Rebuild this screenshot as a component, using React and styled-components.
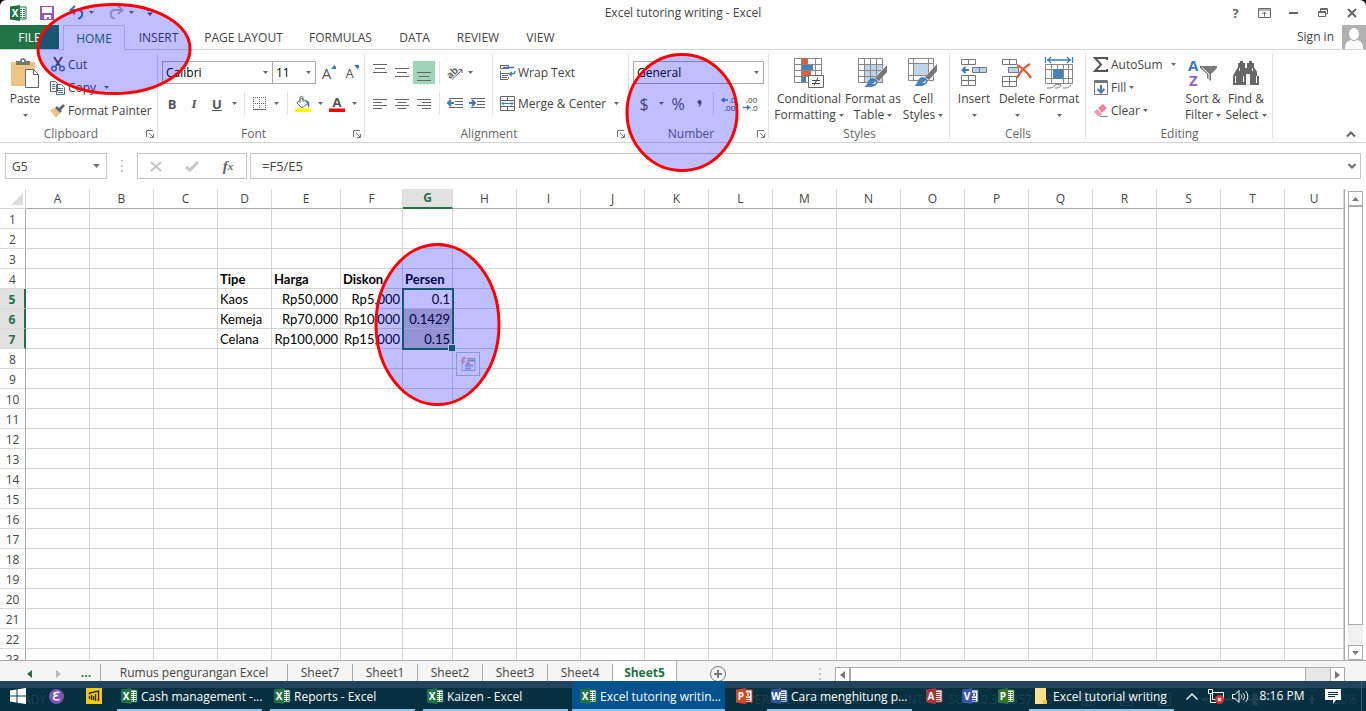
import styled, { createGlobalStyle } from "styled-components";

const tabs = [
    { name: "INSERT", w: 67 },
    { name: "PAGE LAYOUT", w: 103 },
    { name: "FORMULAS", w: 91 },
    { name: "DATA", w: 57 },
    { name: "REVIEW", w: 70 },
    { name: "VIEW", w: 55 },
]

const columns = [
    ["A", 64], ["B", 64], ["C", 64], ["D", 54], ["E", 69], ["F", 62], ["G", 50], ["H", 64], ["I", 64], ["J", 64], ["K", 64],
    ["L", 64], ["M", 64], ["N", 64], ["O", 64], ["P", 64], ["Q", 64], ["R", 64], ["S", 64], ["T", 64], ["U", null],
]

const rows = Array.from({ length: 23 }, (_, i) => i + 1)

const cells = {
    D4: "Tipe", E4: "Harga", F4: "Diskon", G4: "Persen",
    D5: "Kaos", E5: "Rp50,000", F5: "Rp5,000", G5: "0.1",
    D6: "Kemeja", E6: "Rp70,000", F6: "Rp10,000", G6: "0.1429",
    D7: "Celana", E7: "Rp100,000", F7: "Rp15,000", G7: "0.15",
}

const sheets = ["Sheet7", "Sheet1", "Sheet2", "Sheet3", "Sheet4"]

export default function App() {
    return (
        <Screen>
            <GlobalStyle />
            <Window>
                <TitleBar />
                <RibbonTabs />
                <Ribbon />
                <FormulaBar />
                <Workspace>
                    <Sheet />
                    <VerticalScroll>
                        <ScrollButton aria-label="Scroll up"><Triangle dir="up" /></ScrollButton>
                        <VerticalThumb />
                        <VerticalTrack />
                        <ScrollButton aria-label="Scroll down"><Triangle dir="down" /></ScrollButton>
                    </VerticalScroll>
                </Workspace>
                <SheetBar />
            </Window>
            <Footer>
                <StatusBar />
                <Taskbar />
            </Footer>
            <Circle $x={36} $y={3} $w={156} $h={92} viewBox="0 0 156 92"><ellipse cx="78" cy="46" rx="76" ry="44.5" /></Circle>
            <Circle $x={625} $y={53} $w={114} $h={120} viewBox="0 0 114 120"><ellipse cx="57" cy="59.5" rx="55" ry="58" /></Circle>
            <Circle $x={374} $y={243} $w={128} $h={164} viewBox="0 0 128 164"><ellipse cx="63.5" cy="81.5" rx="61.5" ry="80" /></Circle>
        </Screen>
    );
}

function Triangle({ dir = "down", color = "#777" }) {
    const shapes = {
        down: "0,0 7,0 3.5,4",
        up: "0,4 7,4 3.5,0",
        left: "5,0 5,8 0,4",
        right: "0,0 0,8 5,4",
    }
    const side = dir === "left" || dir === "right"
    return (
        <svg width={side ? 5 : 7} height={side ? 8 : 4} aria-hidden="true">
            <polygon points={shapes[dir]} fill={color} />
        </svg>
    );
}

function Caret() {
    return (
        <svg width="5" height="3" aria-hidden="true"><polygon points="0,0 5,0 2.5,3" fill="#666" /></svg>
    );
}

function OfficeIcon({ letter, color, kind }) {
    return (
        <svg width="16" height="16" viewBox="0 0 16 16" aria-hidden="true">
            <rect x="8" y="2" width="8" height="12" fill="#fff" stroke={color} />
            {kind === "chart"
                ? <path d="M10.5 5h3v3h-3zM10 10.5h4M10 12.5h4" stroke={color} fill="none" />
                : kind === "grid"
                    ? <path d="M10 4.5h2M13 4.5h2M10 6.5h2M13 6.5h2M10 8.5h2M13 8.5h2M10 10.5h2M13 10.5h2M10 12.5h2M13 12.5h2" stroke={color} />
                    : <path d="M10 4.5h4.500M10 6.5h4.500M10 8.5h4.500M10 10.5h4.500M10 12.500h4.500" stroke={color} />}
            <path d="M0 1.500 10 0v16L0 14.500z" fill={color} />
            <text x="5" y="12" fontSize="10" fontWeight="700" textAnchor="middle" fill="#fff">{letter}</text>
        </svg>
    );
}

function TitleBar() {
    return (
        <TitleRow>
            <QuickAccess>
                <QuickButton $w={36} aria-label="Excel"><OfficeIcon letter="X" color="#217346" kind="grid" /></QuickButton>
                <QuickButton $w={22} aria-label="Save">
                    <svg width="14" height="14" viewBox="0 0 14 14">
                        <path d="M0 0h14v14H0z" fill="#8e5bb5" />
                        <path d="M2 1h10v6H2zM4 9h7v4H9v-2H7v2H4z" fill="#fff" />
                    </svg>
                </QuickButton>
                <QuickButton $w={28} $pad={10} aria-label="Undo">
                    <svg width="16" height="14" viewBox="0 0 16 14" fill="none" stroke="#3f6fb5" strokeWidth="2">
                        <path d="M6 0 1.500 4 6 8M2 4h7c4 0 5 3 4 5.500-.5 1.500-2 3-4 3" />
                    </svg>
                </QuickButton>
                <QuickButton $w={10} aria-label="Undo list"><Caret /></QuickButton>
                <QuickButton $w={30} $pad={10} aria-label="Redo">
                    <svg width="15" height="14" viewBox="0 0 15 14" fill="none" stroke="#b8b8b8" strokeWidth="2">
                        <path d="M9 0l4.500 4L9 8M13 4H6C2 4 1 7 2 9.500c.5 1.500 2 3 4 3" />
                    </svg>
                </QuickButton>
                <QuickButton $w={10} aria-label="Redo list"><Caret /></QuickButton>
                <QuickButton $w={28} aria-label="Customize">
                    <svg width="6" height="6" viewBox="0 0 6 6"><path d="M0 0h6v1H0zM0 2.500h6L3 6z" fill="#555" /></svg>
                </QuickButton>
            </QuickAccess>
            <WindowTitle>Excel tutoring writing - Excel</WindowTitle>
            <WindowButtons>
                <WindowButton $bold aria-label="Help">?</WindowButton>
                <WindowButton aria-label="Ribbon options">
                    <svg width="13" height="10" viewBox="0 0 13 10" fill="none" stroke="#666">
                        <path d="M.5.5h12v9H.5zM.5 2h12M6.500 8.500V4M4.500 6l2-2 2 2" />
                    </svg>
                </WindowButton>
                <WindowButton aria-label="Minimize"><svg width="9" height="2"><rect width="9" height="2" fill="#666" /></svg></WindowButton>
                <WindowButton aria-label="Restore">
                    <svg width="10" height="10" viewBox="0 0 10 10" fill="none" stroke="#666">
                        <path d="M.5 3.500h7v5h-7zM.5 4.500h7M2.500 3V.5h7v5.500H8M2.500 1.500h7" />
                    </svg>
                </WindowButton>
                <WindowButton aria-label="Close">
                    <svg width="10" height="10" viewBox="0 0 10 10" stroke="#666" strokeWidth="2"><path d="M1 1l8 8M9 1 1 9" /></svg>
                </WindowButton>
            </WindowButtons>
        </TitleRow>
    );
}

function RibbonTabs() {
    return (
        <TabRow>
            <FileTab>FILE</FileTab>
            <HomeTab>HOME</HomeTab>
            {tabs.map((t) => <RibbonTab key={t.name} $w={t.w}>{t.name}</RibbonTab>)}
            <SignIn href="#signin">Sign in</SignIn>
            <svg width="24" height="24" viewBox="0 0 24 24" aria-hidden="true">
                <path d="M0 0h24v24H0z" fill="#b1b1b1" />
                <ellipse cx="12" cy="9" rx="5" ry="6" fill="#fff" />
                <path d="M3 24c0-6 2-8 6-9 2 1.500 4 1.500 6 0 4 1 6 3 6 9z" fill="#fff" />
            </svg>
        </TabRow>
    );
}

function Launcher({ label }) {
    return (
        <LauncherButton aria-label={label}>
            <svg width="8" height="8" viewBox="0 0 8 8" fill="none" stroke="#777">
                <path d="M.5 7V.5H7M3 3l4 4M7.500 4v3.500H4" />
            </svg>
        </LauncherButton>
    );
}

function Group({ name, w, launcher, children }) {
    return (
        <GroupBox $w={w} aria-label={name}>
            <GroupBody>{children}</GroupBody>
            <GroupLabel><span>{name}</span>{launcher && <Launcher label={name + " settings"} />}</GroupLabel>
        </GroupBox>
    );
}

function Combo({ label, value, w }) {
    return (
        <ComboBox $w={w}>
            <select aria-label={label} defaultValue={value}><option>{value}</option></select>
            <Caret />
        </ComboBox>
    );
}

const lineSets = {
    full: "M0 .5h14M2 4.500h10M0 8.500h14",
    left: "M0 .5h14M0 3.500h9M0 6.500h14M0 9.500h9",
    center: "M0 .5h14M2.500 3.500h9M0 6.500h14M2.500 9.500h9",
    right: "M0 .5h14M5 3.500h9M0 6.500h14M5 9.500h9",
}

function Lines({ set, drop = 0 }) {
    return (
        <svg width="14" height="18" viewBox="0 0 14 18" aria-hidden="true"><path d={lineSets[set]} transform={`translate(0 ${drop})`} stroke="#666" /></svg>
    );
}

function Indent({ out }) {
    return (
        <svg width="16" height="11" viewBox="0 0 16 11" aria-hidden="true">
            <path d="M2 .5h14M8 3.500h8M8 6.500h8M2 9.500h14" stroke="#666" />
            <path d={out ? "M7 5H1M4 2 1 5l3 3" : "M0 5h6M3 2l3 3-3 3"} stroke="#3f7ab8" strokeWidth="2" fill="none" />
        </svg>
    );
}

function Decimals({ more }) {
    return (
        <svg width="16" height="14" viewBox="0 0 16 14" fontSize="8" fill="#444" aria-hidden="true">
            <text x={more ? 8 : 3} y="6">{more ? ".0" : ".00"}</text>
            <text x={more ? 3 : 8} y="14">{more ? ".00" : ".0"}</text>
            <path d={more ? "M7 3H1M3.500 1 1 3l2.500 2" : "M0 10.500h6M4 8.500l2.500 2-2.500 2"} fill="none" stroke="#3f7ab8" strokeWidth="1.500" />
        </svg>
    );
}

function Brush({ x = 0, y = 0 }) {
    return (
        <g transform={`translate(${x} ${y})`}>
            <path d="M23 0v7l-8 9-4-3z" fill="#777" stroke="#fff" strokeWidth="1" paintOrder="stroke" />
            <path d="M0 22c4-1 3-8 8-9 4 0 7 3 5 6-3 4-8 3-13 3z" fill="#4a80b8" />
            <path d="M7 19c2 0 4-1 4-3 1 1 1 2 0 3z" fill="#fff" />
        </g>
    );
}

function Ribbon() {
    return (
        <RibbonRow>
            <Group name="Clipboard" w={158} launcher>
                <BigButton $w={50}>
                    <BigIcon>
                        <svg width="28" height="31" viewBox="0 0 28 31">
                            <path d="M0 4h24v24H0z" fill="#ecc583" />
                            <path d="M5 3h4c0-4 6-4 6 0h4v4H5z" fill="#777" />
                            <path d="M11 2h2v2h-2z" fill="#fff" />
                            <path d="M14.500 11.500h8l5 5v13h-13z" fill="#fff" stroke="#666" />
                            <path d="M22.500 11.500v5h5" fill="none" stroke="#666" />
                        </svg>
                    </BigIcon>
                    Paste<ArrowLine><Caret /></ArrowLine>
                </BigButton>
                <SmallStack>
                    <SmallButton>
                        <IconSlot>
                            <svg width="14" height="15" viewBox="0 0 14 15" fill="none">
                                <path d="M3 0l6 9M11 0 5 9" stroke="#555" strokeWidth="2" />
                                <circle cx="3" cy="11.500" r="2.300" stroke="#3f6fb5" strokeWidth="1.400" />
                                <circle cx="11" cy="11.500" r="2.300" stroke="#3f6fb5" strokeWidth="1.400" />
                            </svg>
                        </IconSlot>Cut
                    </SmallButton>
                    <SmallButton>
                        <IconSlot>
                            <svg width="15" height="14" viewBox="0 0 15 14" fill="#fff" stroke="#666">
                                <path d="M.5.5h5l2 2v8h-7zM6.500 3.500h5l3 3v7h-8z" />
                                <path d="M2 3.500h3M2 5.500h3M2 7.500h3M8 7.500h5M8 9.500h5M8 11.500h5" stroke="#3f7ab8" />
                            </svg>
                        </IconSlot>Copy <SpacedCaret><Caret /></SpacedCaret>
                    </SmallButton>
                    <SmallButton>
                        <IconSlot>
                            <svg width="15" height="14" viewBox="0 0 15 14">
                                <path d="M0 6l5-2 5 5-4 5z" fill="#ecc583" />
                                <path d="M5 4l2-2 5 5-2 2zM9 4l4-4 2 2-4 4z" fill="#666" />
                            </svg>
                        </IconSlot>Format Painter
                    </SmallButton>
                </SmallStack>
            </Group>

            <Group name="Font" w={207} launcher>
                <TwoRows>
                    <ToolRow>
                        <Combo label="Font" value="Calibri" w={111} />
                        <Combo label="Font size" value="11" w={43} />
                        <ToolButton $w={26} $size={15} aria-label="Grow font">A<CornerMark><Triangle dir="up" color="#3f7ab8" /></CornerMark></ToolButton>
                        <ToolButton $w={20} $size={13} aria-label="Shrink font">A<CornerMark><Triangle color="#3f7ab8" /></CornerMark></ToolButton>
                    </ToolRow>
                    <ToolRow>
                        <ToolButton $w={20} $bold>B</ToolButton>
                        <ToolButton $w={24} $italic>I</ToolButton>
                        <ToolButton $w={22} $bold $underline>U</ToolButton>
                        <ToolButton $w={12} aria-label="Underline style"><Caret /></ToolButton>
                        <ShortRule />
                        <ToolButton $w={20} aria-label="Borders">
                            <svg width="13" height="13" viewBox="0 0 13 13" stroke="#666" fill="none">
                                <path d="M0 .5h13M0 6.500h13M.5 0v12M6.500 0v12M12.500 0v12" strokeDasharray="1 1" />
                                <path d="M0 12.500h13" />
                            </svg>
                        </ToolButton>
                        <ToolButton $w={14} aria-label="Border style"><Caret /></ToolButton>
                        <ShortRule />
                        <ToolButton $w={22} aria-label="Fill color">
                            <svg width="16" height="16" viewBox="0 0 16 16" fill="none">
                                <path d="M6.500 2 2 7l5 5 6-5zM5 7V1.500C5 0 8 0 8 1.500V6" stroke="#666" />
                                <path d="M10 4c4 0 5 3 4 8-2-2-1-5-4-8z" fill="#3f7ab8" />
                                <path d="M0 12.500h16v3.500H0z" fill="#ff0" />
                            </svg>
                        </ToolButton>
                        <ToolButton $w={12} aria-label="Fill colors"><Caret /></ToolButton>
                        <ToolButton $w={22} aria-label="Font color">
                            <svg width="16" height="16" viewBox="0 0 16 16">
                                <text x="8" y="11" fontSize="13" fontWeight="700" textAnchor="middle" fill="#555">A</text>
                                <path d="M0 12.500h16v3.500H0z" fill="#f00" />
                            </svg>
                        </ToolButton>
                        <ToolButton $w={12} aria-label="Font colors"><Caret /></ToolButton>
                    </ToolRow>
                </TwoRows>
            </Group>

            <Group name="Alignment" w={264} launcher>
                <TwoRows>
                    <ToolRow>
                        <ToolButton $w={22} aria-label="Top align"><Lines set="full" /></ToolButton>
                        <ToolButton $w={22} aria-label="Middle align"><Lines set="full" drop={4} /></ToolButton>
                        <ToolButton $w={22} $active aria-label="Bottom align"><Lines set="full" drop={8} /></ToolButton>
                        <ShortRule />
                        <ToolButton $w={22} aria-label="Orientation">
                            <svg width="16" height="15" viewBox="0 0 16 15">
                                <text x="0" y="11" fontSize="10" fontWeight="700" fill="#666" transform="rotate(-42 6 9)">ab</text>
                                <path d="M5 14.500 15 5M11.500 4.500H15v3.500" stroke="#666" fill="none" />
                            </svg>
                        </ToolButton>
                        <ToolButton $w={8} aria-label="Orientation list"><Caret /></ToolButton>
                    </ToolRow>
                    <ToolRow>
                        <ToolButton $w={22} aria-label="Align left"><Lines set="left" drop={4} /></ToolButton>
                        <ToolButton $w={22} aria-label="Center"><Lines set="center" drop={4} /></ToolButton>
                        <ToolButton $w={22} aria-label="Align right"><Lines set="right" drop={4} /></ToolButton>
                        <ShortRule />
                        <ToolButton $w={22} aria-label="Decrease indent"><Indent out /></ToolButton>
                        <ToolButton $w={22} aria-label="Increase indent"><Indent /></ToolButton>
                    </ToolRow>
                </TwoRows>
                <WrapRows>
                    <SmallButton>
                        <IconSlot>
                            <svg width="16" height="15" viewBox="0 0 16 15" fill="none" stroke="#666">
                                <path d="M.5 0v4M.5 .5h8v3h-8M0 8.500h9M0 14.500h8M.5 6v8M8.500 12v2M2 10.500h6M2 12.500h5" />
                                <path d="M3 2.500h11M15 6c0 3-2 3-5 3M12 7l-2.500 2 2.500 2" stroke="#3f7ab8" strokeWidth="1.500" />
                            </svg>
                        </IconSlot>Wrap Text
                    </SmallButton>
                    <SmallButton>
                        <IconSlot>
                            <svg width="16" height="15" viewBox="0 0 16 15" fill="none" stroke="#666">
                                <path d="M.5.5h14v14H.5zM.5 4.500h14M.5 10.500h14M7.500 0v4M7.500 11v4" />
                                <path d="M2 7.500h11M4 5.500l-2 2 2 2M11 5.500l2 2-2 2" stroke="#3f7ab8" />
                            </svg>
                        </IconSlot>Merge &amp; Center <SpacedCaret><Caret /></SpacedCaret>
                    </SmallButton>
                </WrapRows>
            </Group>

            <Group name="Number" w={140} launcher>
                <TwoRows>
                    <ToolRow><Combo label="Number format" value="General" w={131} /></ToolRow>
                    <ToolRow>
                        <ToolButton $w={22} $size={16} aria-label="Accounting format">$</ToolButton>
                        <ToolButton $w={12} aria-label="Currency list"><Caret /></ToolButton>
                        <ToolButton $w={22} $size={16} aria-label="Percent">%</ToolButton>
                        <ToolButton $w={20} aria-label="Comma style">
                            <svg width="5" height="7" viewBox="0 0 5 7"><circle cx="2.500" cy="2" r="2" fill="#555" /><path d="M4.500 2C4.500 5 3 6.500 1 7c1-1 1.500-2 1.500-3z" fill="#555" /></svg>
                        </ToolButton>
                        <ShortRule />
                        <ToolButton $w={22} aria-label="Increase decimal"><Decimals more /></ToolButton>
                        <ToolButton $w={22} aria-label="Decrease decimal"><Decimals /></ToolButton>
                    </ToolRow>
                </TwoRows>
            </Group>

            <Group name="Styles" w={181}>
                <BigButton $w={80}>
                    <BigIcon>
                        <svg width="30" height="31" viewBox="0 0 30 31" fill="none">
                            <path d="M8 1h6v6H8zM8 13h9v6H8z" fill="#d8613f" />
                            <path d="M8 7h11v6H8zM8 19h4v6H8z" fill="#4a80b8" />
                            <path d="M.5.5h27v24H.5zM0 6.500h28M0 12.500h28M0 18.500h28M7.500 0v25M21.500 0v25" stroke="#888" />
                            <path d="M14.500 17.500h15v12h-15z" fill="#fff" stroke="#666" />
                            <path d="M18 22.500h8M18 25.500h8M24 19.500l-4 8" stroke="#444" />
                        </svg>
                    </BigIcon>
                    Conditional<span>Formatting <Caret /></span>
                </BigButton>
                <BigButton $w={48}>
                    <BigIcon>
                        <svg width="30" height="30" viewBox="0 0 30 30" fill="none">
                            <path d="M7 7h18v18H7z" fill="#bfd3ea" />
                            <path d="M.5.5h24v24H.5zM0 6.500h25M0 12.500h25M0 18.500h25M6.500 0v25M12.500 0v25M18.500 0v25" stroke="#888" />
                            <Brush x={6} y={7} />
                        </svg>
                    </BigIcon>
                    Format as<span>Table <Caret /></span>
                </BigButton>
                <BigButton $w={52}>
                    <BigIcon>
                        <svg width="30" height="30" viewBox="0 0 30 30" fill="none">
                            <path d="M5 6h15v12H5z" fill="#bfd3ea" />
                            <path d="M.5.5h25v22H.5zM0 5.500h26M0 17.500h26M5.500 0v23M20.500 0v23" stroke="#888" />
                            <Brush x={6} y={6} />
                        </svg>
                    </BigIcon>
                    Cell<span>Styles <Caret /></span>
                </BigButton>
            </Group>

            <Group name="Cells" w={136}>
                <BigButton $w={48}>
                    <BigIcon>
                        <svg width="26" height="28" viewBox="0 0 26 28" fill="none" stroke="#777">
                            <path d="M.5.5h14v5H.5zM7.500 0v6M.5 16.500h14v10H.5zM.5 21.500h14M7.500 16v11" />
                            <path d="M11.500 8.500h14v5h-14zM18.500 8v6" fill="#bfd3ea" />
                            <path d="M8 11H2M4.500 8l-3 3 3 3" stroke="#3f7ab8" strokeWidth="2" />
                        </svg>
                    </BigIcon>
                    Insert<ArrowLine><Caret /></ArrowLine>
                </BigButton>
                <BigButton $w={38}>
                    <BigIcon>
                        <svg width="30" height="28" viewBox="0 0 30 28" fill="none" stroke="#777">
                            <path d="M.5.5h14v5H.5zM7.500 0v6M.5 17.500h14v10H.5zM.5 22.500h14M7.500 17v11" />
                            <path d="M6.500 8.500h10v5h-10z" fill="#bfd3ea" />
                            <path d="M15 6c6 3 10 7 14 13M28 5c-6 3-10 8-13 14" stroke="#d8613f" strokeWidth="2.500" />
                        </svg>
                    </BigIcon>
                    Delete<ArrowLine><Caret /></ArrowLine>
                </BigButton>
                <BigButton $w={46}>
                    <BigIcon>
                        <svg width="29" height="32" viewBox="0 0 29 32" fill="none">
                            <path d="M.5 0v6M27.500 0v6M2 3h24M6 0 3 3l3 3M22 0l3 3-3 3" stroke="#3f7ab8" strokeWidth="1.300" />
                            <path d="M.5 7.500h27v19H.5zM0 12.500h28M0 21.500h28M6.500 7v20M18.500 7v20M12.500 7v5M23.500 7v20" stroke="#888" />
                            <path d="M8 12h10v10H8z" fill="#4a80b8" />
                            <path d="M2 31c5 0 6 0 8-3 1-1 4-1 6 0-1 3-4 3-6 3M18 31c3 0 6 0 8-3" stroke="#777" />
                        </svg>
                    </BigIcon>
                    Format<ArrowLine><Caret /></ArrowLine>
                </BigButton>
            </Group>

            <Group name="Editing" w={187}>
                <EditStack>
                    <SmallButton>
                        <IconSlot>
                            <svg width="15" height="15" viewBox="0 0 15 15" fill="none"><path d="M14 3V1H2l6 6.500L2 14h12v-2" stroke="#555" strokeWidth="2" /></svg>
                        </IconSlot>AutoSum <SpacedCaret><Caret /></SpacedCaret>
                    </SmallButton>
                    <SmallButton>
                        <IconSlot>
                            <svg width="14" height="15" viewBox="0 0 14 15" fill="none">
                                <path d="M.5.5h13v14H.5zM0 1.500h14M0 2.500h14" stroke="#777" />
                                <path d="M7 5v7M3.500 9 7 12.500 10.500 9" stroke="#3f7ab8" strokeWidth="2" />
                            </svg>
                        </IconSlot>Fill<Caret />
                    </SmallButton>
                    <SmallButton>
                        <IconSlot>
                            <svg width="14" height="13" viewBox="0 0 14 13">
                                <path d="M4 4l5-4 4 4-5 5z" fill="#e8889a" /><path d="M3 5l5 5-2 2H4L0 8z" fill="#eb9dab" />
                                <path d="M6 12.500h8" stroke="#888" />
                            </svg>
                        </IconSlot>Clear<Caret />
                    </SmallButton>
                </EditStack>
                <BigButton $w={44}>
                    <BigIcon>
                        <svg width="30" height="28" viewBox="0 0 30 28">
                            <text x="0" y="12" fontSize="15" fontWeight="700" fill="#3f7ab8">A</text>
                            <text x="1" y="27" fontSize="15" fontWeight="700" fill="#9b62bb">Z</text>
                            <path d="M12 7h17v2l-6 6v7l-4-3v-4l-7-6z" fill="#777" />
                            <path d="M14 8.500 21 15v5" stroke="#fff" fill="none" />
                        </svg>
                    </BigIcon>
                    Sort &amp;<span>Filter <Caret /></span>
                </BigButton>
                <BigButton $w={42}>
                    <BigIcon>
                        <svg width="26" height="24" viewBox="0 0 26 24" fill="#666">
                            <path d="M5 2h2V0h3v2h2v5h2V2h2V0h3v2h2v4l3 5v4l2 0v9h-9V13h-4v11H0v-9l2-4 3-5z" />
                            <path d="M2.500 15v7M23.500 15v7M6.500 7v3M19.500 7v3M10.500 15v6" stroke="#fff" />
                        </svg>
                    </BigIcon>
                    Find &amp;<span>Select <Caret /></span>
                </BigButton>
            </Group>
            <CollapseButton aria-label="Collapse ribbon">
                <svg width="10" height="7" viewBox="0 0 10 7" fill="none" stroke="#666" strokeWidth="2"><path d="M1 5.500 5 1.500l4 4" /></svg>
            </CollapseButton>
        </RibbonRow>
    );
}

function FormulaBar() {
    return (
        <FormulaRow>
            <NameBox>
                <input aria-label="Name box" defaultValue="G5" />
                <Triangle />
            </NameBox>
            <Dots />
            <FormulaButtons>
                <button aria-label="Cancel"><svg width="12" height="11" viewBox="0 0 12 11" stroke="#c6c6c6" strokeWidth="2"><path d="M1 1l10 9M11 1 1 10" /></svg></button>
                <button aria-label="Enter"><svg width="14" height="11" viewBox="0 0 14 11" stroke="#c6c6c6" strokeWidth="3" fill="none"><path d="M1 6l4 3 8-8" /></svg></button>
                <FxButton aria-label="Insert function">f<sub>x</sub></FxButton>
            </FormulaButtons>
            <FormulaField>
                <input aria-label="Formula" defaultValue="=F5/E5" />
                <svg width="8" height="6" viewBox="0 0 8 6" fill="none" stroke="#666" strokeWidth="2"><path d="M.5 1 4 4.500 7.500 1" /></svg>
            </FormulaField>
        </FormulaRow>
    );
}

function Sheet() {
    return (
        <SheetView>
            <Grid>
                <colgroup>
                    <col width="26" />
                    {columns.map(([name, w]) => <col key={name} width={w ?? undefined} />)}
                </colgroup>
                <thead>
                    <tr>
                        <CornerHead aria-label="Select all">
                            <svg width="12" height="12"><polygon points="12,0 12,12 0,12" fill="#ddd" /></svg>
                        </CornerHead>
                        {columns.map(([name]) => <ColumnHead key={name} $active={name === "G"}>{name}</ColumnHead>)}
                    </tr>
                </thead>
                <tbody>
                    {rows.map((r) =>
                        <tr key={r}>
                            <RowHead $active={r >= 5 && r <= 7}>{r}</RowHead>
                            {columns.map(([name]) =>
                                <Cell
                                    key={name}
                                    $bold={r === 4}
                                    $right={r > 4 && name !== "D"}
                                    $shaded={name === "G" && (r === 6 || r === 7)}
                                >
                                    {cells[name + r]}
                                    {name + r === "G5" && <Selection />}
                                    {name + r === "H8" && <QuickAnalysis />}
                                </Cell>
                            )}
                        </tr>
                    )}
                </tbody>
            </Grid>
        </SheetView>
    );
}

function QuickAnalysis() {
    return (
        <AnalysisButton aria-label="Quick analysis">
            <svg width="16" height="15" viewBox="0 0 16 15" fill="none">
                <path d="M7 1.500h8v12H2V9" stroke="#bbb" />
                <path d="M7 3.500h8" stroke="#aaa" strokeWidth="2" />
                <path d="M6 6.500h4" stroke="#e39a8c" strokeWidth="2" />
                <path d="M5 8.500h8M5 11.500h6" stroke="#9bb5d8" strokeWidth="2" />
                <path d="M3 0h3L4 4h2L1 9l1-4H0z" fill="#e4b6b0" />
            </svg>
        </AnalysisButton>
    );
}

function SheetBar() {
    return (
        <SheetRow>
            <NavButton $w={58} aria-label="Previous sheets"><Triangle dir="left" color="#217346" /></NavButton>
            <NavButton $w={0} aria-label="Next sheets"><Triangle dir="right" color="#bbb" /></NavButton>
            <MoreSheets aria-label="More sheets">...</MoreSheets>
            <SheetTab $w={187}>Rumus pengurangan Excel</SheetTab>
            {sheets.map((s) => <SheetTab key={s} $w={65}>{s}</SheetTab>)}
            <ActiveSheet>Sheet5</ActiveSheet>
            <AddSheet aria-label="New sheet">
                <svg width="16" height="16" viewBox="0 0 16 16" fill="none" stroke="#777">
                    <circle cx="8" cy="8" r="7.500" /><path d="M8 4v8M4 8h8" strokeWidth="2" />
                </svg>
            </AddSheet>
            <SheetScroll>
                <Dots />
                <ScrollButton $flat aria-label="Scroll left"><Triangle dir="left" /></ScrollButton>
                <HorizontalThumb />
                <HorizontalTrack />
                <ScrollButton $flat aria-label="Scroll right"><Triangle dir="right" /></ScrollButton>
            </SheetScroll>
        </SheetRow>
    );
}

function StatusBar() {
    return (
        <StatusRow>
            <span>READY</span>
            <StatusSums>
                <span>AVERAGE: 0.130952381</span>
                <span>COUNT: 3</span>
                <span>SUM: 0.392857143</span>
            </StatusSums>
            <StatusViews>
                <svg width="90" height="13" viewBox="0 0 90 13" fill="none" stroke="currentColor">
                    <path d="M.5.5h12v12H.5zM0 4.500h13M0 8.500h13M4.500 0v13M8.500 0v13M38.500.5h12v12h-12zM41.500 3.500h6v6h-6zM76.500.5h12v12h-12zM80.500 0v8M84.500 0v8" />
                </svg>
                <svg width="114" height="13" viewBox="0 0 114 13" fill="none" stroke="currentColor">
                    <path d="M0 6.500h6M16 6.500h84M106 6.500h8M110 2v9" strokeWidth="2" /><path d="M51 1h4v11h-4z" fill="currentColor" />
                </svg>
                <span>100%</span>
            </StatusViews>
        </StatusRow>
    );
}

function Taskbar() {
    return (
        <TaskRow>
            <TaskIcon $w={36} aria-label="Start">
                <svg width="16" height="16" viewBox="0 0 16 16" fill="#fff">
                    <path d="M0 2.500 6.500 1.500V7.500H0zM7.500 1.300 16 0v7.500H7.500zM0 8.500h6.500v6L0 13.500zM7.500 8.500H16V16l-8.500-1.300z" />
                </svg>
            </TaskIcon>
            <TaskIcon $w={40} aria-label="Emacs">
                <svg width="15" height="15" viewBox="0 0 15 15" fill="none">
                    <circle cx="7.500" cy="7.500" r="7.500" fill="#7e55b5" />
                    <path d="M10.500 3.500C7 3 4.500 4 5 5.500c.5 1 2 1 4 1-4 0-5 2-4 3.500 1 1 3.500 1 5.500.5" stroke="#fff" strokeWidth="1.500" />
                </svg>
            </TaskIcon>
            <TaskIcon $w={36} aria-label="Power BI">
                <svg width="16" height="16" viewBox="0 0 16 16" fill="none">
                    <path d="M0 0h16v16H0z" fill="#f2c811" />
                    <path d="M3.500 11V8M5.500 12V7M7.500 12V8M9.500 13V6M3.500 6.500V5l9-2v9h-1" stroke="#222" strokeWidth="1.300" />
                </svg>
            </TaskIcon>
            <Tasks>
                <Task><OfficeIcon letter="X" color="#217346" kind="grid" /><span>Cash management -...</span></Task>
                <Task><OfficeIcon letter="X" color="#217346" kind="grid" /><span>Reports - Excel</span></Task>
                <Task><OfficeIcon letter="X" color="#217346" kind="grid" /><span>Kaizen - Excel</span></Task>
            </Tasks>
            <Task $active><OfficeIcon letter="X" color="#217346" kind="grid" /><span>Excel tutoring writin...</span></Task>
            <TaskIcon $w={38} aria-label="PowerPoint"><OfficeIcon letter="P" color="#d24726" kind="chart" /></TaskIcon>
            <Task><OfficeIcon letter="W" color="#2a5699" /><span>Cara menghitung p...</span></Task>
            <OfficeTasks>
                <TaskIcon $w={36} aria-label="Access"><OfficeIcon letter="A" color="#a4373a" /></TaskIcon>
                <TaskIcon $w={36} aria-label="Visio"><OfficeIcon letter="V" color="#3955a3" kind="chart" /></TaskIcon>
                <TaskIcon $w={36} aria-label="Project"><OfficeIcon letter="P" color="#31752f" kind="grid" /></TaskIcon>
            </OfficeTasks>
            <Task>
                <svg width="16" height="16" viewBox="0 0 16 16">
                    <path d="M2 0h11v16H2z" fill="#ffe08a" /><path d="M10 12h4v4h-4z" fill="#f3c14b" />
                </svg>
                <span>Excel tutorial writing</span>
            </Task>
            <Tray>
                <TaskIcon $w={24} aria-label="Hidden icons">
                    <svg width="12" height="7" viewBox="0 0 12 7" fill="none" stroke="#fff" strokeWidth="1.400"><path d="M.5 6.500 6 1l5.500 5.500" /></svg>
                </TaskIcon>
                <TaskIcon $w={24} aria-label="Network">
                    <svg width="16" height="15" viewBox="0 0 16 15" fill="none" stroke="#fff">
                        <path d="M4.500 3.500h11v7h-11zM.5.5h4v4h-4zM2.500 4v9.500H8" />
                        <circle cx="11.500" cy="10.500" r="4.500" fill="#e02c2c" stroke="none" />
                        <path d="M10 9l3 3M13 9l-3 3" strokeWidth="1.300" />
                    </svg>
                </TaskIcon>
                <TaskIcon $w={24} aria-label="Volume">
                    <svg width="17" height="13" viewBox="0 0 17 13" fill="none" stroke="#fff">
                        <path d="M.5 4.500H3l4-4v12l-4-4H.5zM9 4.500c1 1 1 3 0 4M11 3c2 2 2 5 0 7M13.500 1c3 3 3 8 0 11" />
                    </svg>
                </TaskIcon>
                <Clock>8:16 PM</Clock>
                <TaskIcon $w={42} aria-label="Notifications">
                    <svg width="16" height="15" viewBox="0 0 16 15">
                        <path d="M0 0h16v11h-5l-3 4v-4H0z" fill="#fff" /><path d="M3 3.500h10M3 5.500h10M3 7.500h7" stroke="#062f40" />
                    </svg>
                </TaskIcon>
                <DesktopEdge />
            </Tray>
        </TaskRow>
    );
}

const GlobalStyle = createGlobalStyle`
    * {
        box-sizing: border-box;
    }

    body {
        margin: 0;
        background-color: #000000;
        font-family: 'Open Sans', sans-serif;
        font-size: 12px;
        color: #444444;
    }

    button, input, select {
        margin: 0;
        padding: 0;
        border: 0;
        background: none;
        font: inherit;
        color: inherit;
    }

    svg {
        display: block;
        flex: none;
        overflow: visible;
    }
`;

const Screen = styled.div`
    position: relative;
    height: 100vh;
    display: flex;
    flex-direction: column;
    overflow: hidden;
`;

const Window = styled.main`
    flex: 1;
    min-height: 0;
    display: flex;
    flex-direction: column;
    background-color: #FFFFFF;
    border-radius: 6px 6px 0 0;
    overflow: hidden;
`;

const Circle = styled.svg`
    position: absolute;
    z-index: 2;
    left: ${(p) => p.$x}px;
    top: ${(p) => p.$y}px;
    width: ${(p) => p.$w}px;
    height: ${(p) => p.$h}px;
    fill: rgba(0, 0, 255, 0.25);
    stroke: #FF0000;
    stroke-width: 3px;
    pointer-events: none;
`;

const TitleRow = styled.header`
    flex: none;
    height: 25px;
    display: grid;
    grid-template-columns: 1fr auto 1fr;
    align-items: center;
`;

const QuickAccess = styled.div`
    display: flex;
    align-items: center;
`;

const QuickButton = styled.button`
    width: ${(p) => p.$w}px;
    height: 22px;
    padding-left: ${(p) => p.$pad || 0}px;
    display: flex;
    align-items: center;
    justify-content: center;
`;

const WindowTitle = styled.span`
    line-height: 16px;
`;

const WindowButtons = styled.div`
    display: flex;
    justify-content: flex-end;
`;

const WindowButton = styled.button`
    width: 29px;
    height: 22px;
    display: flex;
    align-items: center;
    justify-content: center;
    color: #666666;
    font-size: 13px;
    font-weight: ${(p) => p.$bold ? 700 : 400};
`;

const TabRow = styled.nav`
    flex: none;
    height: 25px;
    display: flex;
    align-items: stretch;
    border-bottom: 1px solid #D4D4D4;
`;

const RibbonTab = styled.button`
    width: ${(p) => p.$w}px;
    flex: none;
    white-space: nowrap;
`;

const FileTab = styled.button`
    width: 59px;
    background-color: #217346;
    color: #FFFFFF;
`;

const HomeTab = styled.button`
    width: 62px;
    height: 25px;
    margin-left: 4px;
    border: 1px solid #D4D4D4;
    border-bottom: 0;
    background-color: #FFFFFF;
    color: #217346;
`;

const SignIn = styled.a`
    margin-left: auto;
    padding-right: 8px;
    line-height: 24px;
    color: #444444;
    text-decoration: none;
`;

const RibbonRow = styled.section`
    flex: none;
    height: 93px;
    display: flex;
    border-bottom: 1px solid #D4D4D4;
`;

const GroupBox = styled.section`
    width: ${(p) => p.$w}px;
    flex: none;
    display: flex;
    flex-direction: column;
    background: linear-gradient(#E1E1E1, #E1E1E1) no-repeat right 4px / 1px 84px;
`;

const GroupBody = styled.div`
    height: 76px;
    display: flex;
    align-items: flex-start;
`;

const GroupLabel = styled.div`
    display: flex;
    line-height: 16px;
    color: #666666;
    text-align: center;

    span {
        flex: 1;
    }
`;

const LauncherButton = styled.button`
    width: 16px;
    display: flex;
    align-items: center;
    justify-content: center;
`;

const BigButton = styled.button`
    width: ${(p) => p.$w}px;
    padding-top: 5px;
    display: flex;
    flex-direction: column;
    align-items: center;
    line-height: 16px;
    white-space: nowrap;

    span {
        display: flex;
        align-items: center;
        gap: 3px;
    }
`;

const BigIcon = styled.i`
    height: 36px;
    display: flex;
    align-items: center;
    font-style: normal;
`;

const ArrowLine = styled.span`
    height: 16px;
`;

const SmallStack = styled.div`
    padding-top: 3px;
`;

const EditStack = styled.div`
    width: 95px;
    padding: 3px 0 0 7px;
`;

const SmallButton = styled.button`
    height: 23px;
    display: flex;
    align-items: center;
    gap: 3px;
    white-space: nowrap;
`;

const IconSlot = styled.i`
    width: 15px;
    display: flex;
    justify-content: center;
    font-style: normal;
`;

const SpacedCaret = styled.span`
    padding-left: 5px;
`;

const TwoRows = styled.div`
    padding: 11px 0 0 4px;
    display: flex;
    flex-direction: column;
    gap: 8px;
`;

const WrapRows = styled.div`
    margin: 4px 0 0 4px;
    padding: 7px 0 0 7px;
    border-left: 1px solid #E1E1E1;
    display: flex;
    flex-direction: column;
    gap: 8px;
`;

const ToolRow = styled.div`
    height: 23px;
    display: flex;
    align-items: center;
`;

const ToolButton = styled.button`
    width: ${(p) => p.$w}px;
    height: 23px;
    display: flex;
    align-items: center;
    justify-content: center;
    background-color: ${(p) => p.$active ? "#9FD5B7" : "transparent"};
    font-size: ${(p) => p.$size || 13}px;
    font-weight: ${(p) => p.$bold || p.$italic ? 700 : 400};
    font-family: ${(p) => p.$italic ? "'Liberation Serif', serif" : "inherit"};
    font-style: ${(p) => p.$italic ? "italic" : "normal"};
    text-decoration: ${(p) => p.$underline ? "underline" : "none"};
    color: #555555;
`;

const CornerMark = styled.span`
    align-self: flex-start;
    padding-top: 4px;

    svg {
        width: 5px;
        overflow: hidden;
    }
`;

const ShortRule = styled.div`
    width: 1px;
    height: 23px;
    margin: 0 4px;
    background-color: #E1E1E1;
`;

const ComboBox = styled.div`
    width: ${(p) => p.$w}px;
    height: 23px;
    display: flex;
    align-items: center;
    padding-right: 4px;
    border: 1px solid #ABABAB;

    & + & {
        border-left: 0;
    }

    select {
        flex: 1;
        min-width: 0;
        padding-left: 3px;
        appearance: none;
        color: #000000;
    }
`;

const CollapseButton = styled.button`
    margin-left: auto;
    width: 30px;
    height: 16px;
    align-self: flex-end;
    display: flex;
    align-items: center;
    justify-content: center;
`;

const FormulaRow = styled.section`
    flex: none;
    height: 46px;
    padding: 10px 5px;
    display: flex;
`;

const NameBox = styled.div`
    width: 102px;
    padding: 0 6px;
    display: flex;
    align-items: center;
    border: 1px solid #C6C6C6;

    input {
        flex: 1;
        min-width: 0;
    }
`;

const Dots = styled.div`
    width: 30px;
    background: radial-gradient(circle, #999999 1px, transparent 1px) center / 30px 5px;
    background-clip: content-box;
    padding: 6px 0;
`;

const FormulaButtons = styled.div`
    width: 110px;
    margin-right: 3px;
    display: grid;
    grid-template-columns: repeat(3, 1fr);
    border: 1px solid #C6C6C6;

    button {
        display: flex;
        align-items: center;
        justify-content: center;
    }
`;

const FxButton = styled.button`
    font-family: 'Liberation Serif', serif;
    font-style: italic;
    font-weight: 700;
    font-size: 15px;
    color: #666666;

    sub {
        font-size: 11px;
    }
`;

const FormulaField = styled.div`
    flex: 1;
    display: flex;
    align-items: center;
    padding: 0 4px 0 11px;
    border: 1px solid #C6C6C6;

    input {
        flex: 1;
        font-size: 13px;
    }
`;

const Workspace = styled.div`
    flex: 1;
    min-height: 0;
    display: flex;
`;

const SheetView = styled.div`
    flex: 1;
    min-width: 0;
    overflow: hidden;
    border-right: 1px solid #ABABAB;
`;

const Grid = styled.table`
    width: 100%;
    table-layout: fixed;
    border-collapse: separate;
    border-spacing: 0;
`;

const CornerHead = styled.th`
    height: 20px;
    padding: 0 3px 0 11px;
    border-right: 1px solid #D4D4D4;
    border-bottom: 1px solid #D4D4D4;
`;

const ColumnHead = styled.th`
    height: 20px;
    padding: 0;
    border-right: 1px solid #D9D9D9;
    border-bottom: ${(p) => p.$active ? "2px solid #217346" : "1px solid #ABABAB"};
    background-color: ${(p) => p.$active ? "#E1E1E1" : "#FFFFFF"};
    font-size: 12px;
    line-height: 16px;
    font-weight: ${(p) => p.$active ? 700 : 400};
    color: ${(p) => p.$active ? "#217346" : "#444444"};
`;

const RowHead = styled.th`
    height: 20px;
    padding: 2px 0 0;
    border-right: ${(p) => p.$active ? "2px solid #217346" : "1px solid #ABABAB"};
    border-bottom: 1px solid #D9D9D9;
    background-color: ${(p) => p.$active ? "#E1E1E1" : "#FFFFFF"};
    font-size: 12px;
    line-height: 16px;
    font-weight: ${(p) => p.$active ? 700 : 400};
    color: ${(p) => p.$active ? "#217346" : "#444444"};
`;

const Cell = styled.td`
    position: relative;
    height: 20px;
    padding: 0 2px;
    border-right: 1px solid #D4D4D4;
    border-bottom: 1px solid #D4D4D4;
    background-color: ${(p) => p.$shaded ? "#C6C6C6" : "transparent"};
    font-family: Lato, sans-serif;
    font-size: 13px;
    line-height: 16px;
    font-weight: ${(p) => p.$bold ? 700 : 400};
    text-align: ${(p) => p.$right ? "right" : "left"};
    white-space: nowrap;
    color: #000000;
`;

const Selection = styled.div`
    position: absolute;
    z-index: 1;
    left: -1px;
    top: -1px;
    width: 52px;
    height: 62px;
    border: 2px solid #217346;

    &::after {
        content: "";
        position: absolute;
        right: -3px;
        bottom: -3px;
        width: 6px;
        height: 6px;
        border: 1px solid #FFFFFF;
        border-width: 1px 0 0 1px;
        background-color: #217346;
    }
`;

const AnalysisButton = styled.button`
    position: absolute;
    z-index: 1;
    left: 3px;
    top: 3px;
    width: 24px;
    height: 24px;
    display: flex;
    align-items: center;
    justify-content: center;
    border: 1px solid #B5CEC0;
    background-color: #FFFFFF;
`;

const VerticalScroll = styled.div`
    width: 21px;
    padding: 2px 3px 0 3px;
    display: flex;
    flex-direction: column;
`;

const ScrollButton = styled.button`
    flex: none;
    width: 15px;
    height: 15px;
    display: flex;
    align-items: center;
    justify-content: center;
    border: 1px solid #ABABAB;
    border-bottom-width: ${(p) => p.$flat ? 0 : 1}px;
    background-color: #FFFFFF;
`;

const VerticalThumb = styled.div`
    flex: 21;
    border: 1px solid #ABABAB;
`;

const VerticalTrack = styled.div`
    flex: 1;
    background-color: #F0F0F0;
`;

const SheetRow = styled.nav`
    flex: none;
    height: 21px;
    display: flex;
    align-items: stretch;
    border-top: 1px solid #ABABAB;
    background-color: #F5F5F5;
    overflow: hidden;
`;

const NavButton = styled.button`
    width: ${(p) => p.$w}px;
    padding-top: 5px;
    display: flex;
    align-items: center;
    justify-content: center;
    overflow: visible;
`;

const MoreSheets = styled.button`
    width: 43px;
    margin-top: 3px;
    padding-left: 14px;
    border-right: 1px solid #ABABAB;
    font-weight: 700;
    color: #217346;
`;

const SheetTab = styled.button`
    width: ${(p) => p.$w}px;
    flex: none;
    margin-top: 3px;
    padding-top: 1px;
    border-right: 1px solid #ABABAB;
    line-height: 16px;
    white-space: nowrap;
`;

const ActiveSheet = styled.button`
    width: 64px;
    flex: none;
    padding-top: 4px;
    border-right: 1px solid #ABABAB;
    background-color: #FFFFFF;
    font-weight: 700;
    line-height: 16px;
    color: #217346;
`;

const AddSheet = styled.button`
    width: 82px;
    padding-top: 5px;
    display: flex;
    align-items: center;
    justify-content: center;
`;

const SheetScroll = styled.div`
    flex: 1;
    margin-left: 46px;
    padding: 6px 21px 0 0;
    display: flex;

    ${Dots} {
        padding: 0;
    }
`;

const HorizontalThumb = styled.div`
    flex: 19;
    border: 1px solid #ABABAB;
    border-bottom: 0;
    background-color: #FFFFFF;
`;

const HorizontalTrack = styled.div`
    flex: 1;
    border-top: 1px solid #ABABAB;
    background-color: #E8E8E8;
`;

const Footer = styled.footer`
    flex: none;
    height: 30px;
    display: grid;

    & > * {
        grid-area: 1 / 1;
        min-width: 0;
    }
`;

const StatusRow = styled.div`
    padding: 7px 9px 0 9px;
    display: flex;
    align-items: center;
    background: linear-gradient(#24435C 7px, #062F40 7px);
    line-height: 16px;
    color: #1E4152;
    white-space: nowrap;
`;

const StatusSums = styled.div`
    margin-left: auto;
    padding-right: 30px;
    display: flex;
    gap: 12px;
`;

const StatusViews = styled.div`
    display: flex;
    align-items: center;
    gap: 30px;

    span {
        margin-left: -20px;
    }
`;

const TaskRow = styled.nav`
    display: flex;
    align-items: stretch;
    color: #FFFFFF;
`;

const TaskIcon = styled.button`
    width: ${(p) => p.$w}px;
    flex: none;
    display: flex;
    align-items: center;
    justify-content: center;
`;

const Tasks = styled.div`
    margin: 0 4px 0 1px;
    display: flex;
    gap: 4px;
`;

const Task = styled.button`
    width: ${(p) => p.$active ? 153 : 145}px;
    flex: none;
    margin-left: ${(p) => p.$active ? 0 : 4}px;
    padding: 2px ${(p) => p.$active ? 8 : 4}px 0;
    display: flex;
    align-items: center;
    gap: 4px;
    border-bottom: 2px solid #8CC4F0;
    background-color: ${(p) => p.$active ? "#02528F" : "transparent"};
    white-space: nowrap;
`;

const OfficeTasks = styled.div`
    margin: 0 1px 0 4px;
    display: flex;
`;

const Tray = styled.div`
    margin-left: auto;
    padding-right: 4px;
    display: flex;
`;

const Clock = styled.time`
    width: 60px;
    line-height: 30px;
    text-align: center;
`;

const DesktopEdge = styled.div`
    width: 1px;
    margin-left: 7px;
    background-color: #3D5B6B;
`;
